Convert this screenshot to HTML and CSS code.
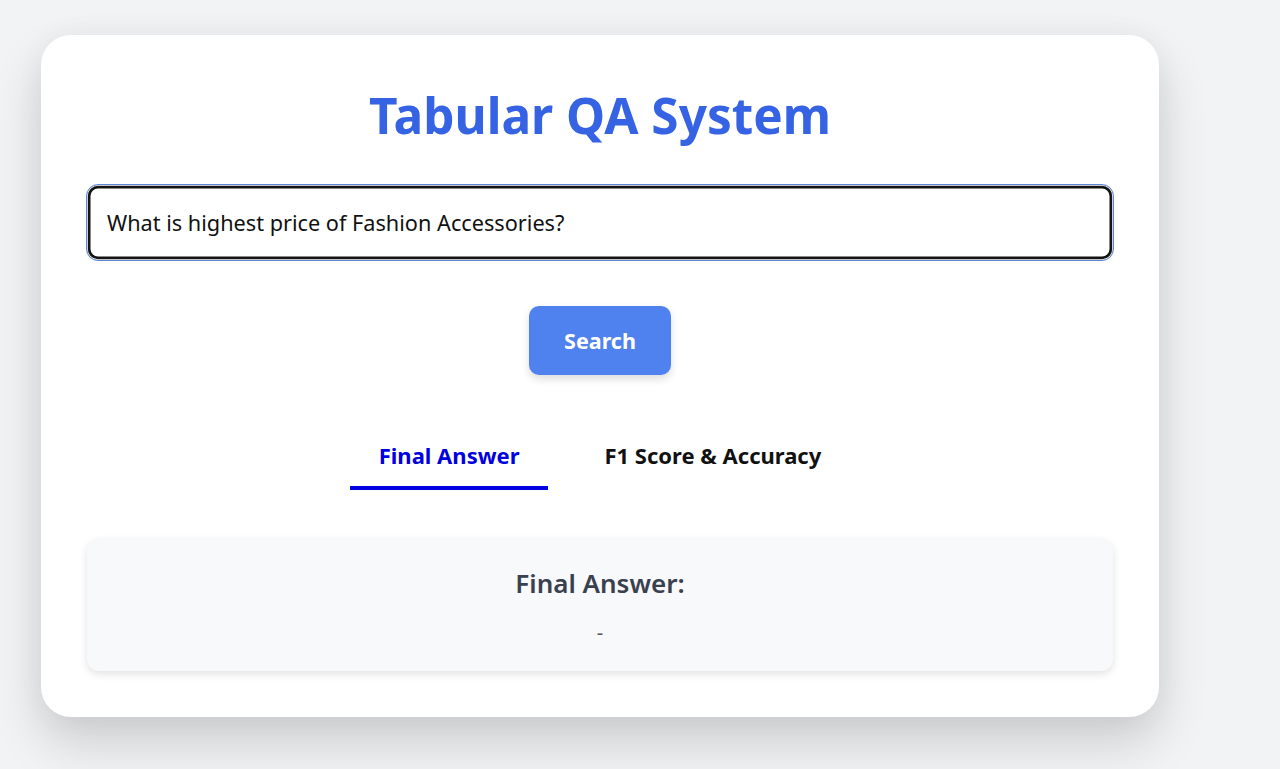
FILE: index.html
```html
<!DOCTYPE html>
<html lang="en">
<head>
<meta charset="utf-8">
<title>Tabular QA System</title>
<link rel="stylesheet" href="styles.css">
</head>
<body>
<div class="card">
  <h1 class="title">Tabular QA System</h1>
  <input class="query" type="text" value="What is highest price of Fashion Accessories?">
  <div class="actions">
    <button class="search-btn">Search</button>
  </div>
  <div class="tabs">
    <div class="tab active">Final Answer</div>
    <div class="tab">F1 Score &amp; Accuracy</div>
  </div>
  <div class="answer">
    <h2 class="answer-title">Final Answer:</h2>
    <p class="answer-value">-</p>
  </div>
</div>
</body>
</html>
```
FILE: styles.css
```css
html, body {
  margin: 0;
  padding: 0;
}
body {
  background: #f2f3f5;
  font-family: "Noto Sans", "Open Sans", sans-serif;
  min-height: 769px;
  padding-top: 35px;
  padding-left: 41px;
  box-sizing: border-box;
}
.card {
  width: 1118px;
  box-sizing: border-box;
  background: #ffffff;
  border-radius: 30px;
  padding: 46px 46px 46px;
  box-shadow: 0 25px 50px rgba(0, 0, 0, 0.16), 0 0 30px rgba(0, 0, 0, 0.04);
}
.title {
  margin: 0;
  text-align: center;
  color: #3563e3;
  font-size: 49.5px;
  font-weight: 700;
  line-height: 68px;
}
.query {
  display: block;
  width: calc(100% + 2px);
  box-sizing: border-box;
  margin: 35px -1px 0;
  height: 77px;
  padding: 0 20px;
  font-family: inherit;
  font-size: 21.7px;
  color: #111;
  border: 1.5px solid #5f86d4;
  border-radius: 12px;
  box-shadow: inset 0 0 0 0.8px #fff, inset 0 0 0 3.5px #141414;
  outline: none;
}
.actions {
  display: flex;
  justify-content: center;
  margin-top: 45px;
}
.search-btn {
  width: 142px;
  height: 69px;
  border: none;
  border-radius: 10px;
  background: #4f82ee;
  color: #fff;
  font-family: inherit;
  font-size: 21.5px;
  font-weight: 700;
  box-shadow: 0 4px 8px rgba(0, 0, 0, 0.14);
}
.tabs {
  display: flex;
  justify-content: center;
  gap: 27px;
  margin-top: 55px;
}
.tab {
  padding: 0 29px;
  height: 60px;
  line-height: 50px;
  font-size: 22px;
  font-weight: 700;
  color: #111;
  box-sizing: border-box;
  border-bottom: 4px solid transparent;
}
.tab.active {
  color: #0000e0;
  border-bottom-color: #0000e0;
}
.answer {
  margin-top: 49px;
  background: #f8f9fb;
  border-radius: 12px;
  height: 132px;
  box-sizing: border-box;
  padding-top: 22px;
  text-align: center;
  box-shadow: 0 3px 8px rgba(0, 0, 0, 0.12);
}
.answer-title {
  margin: 0;
  font-size: 26px;
  font-weight: 600;
  color: #3a414e;
  line-height: 44px;
}
.answer-value {
  margin: 13px 0 0;
  font-size: 20px;
  color: #555;
  line-height: 30px;
}
```
